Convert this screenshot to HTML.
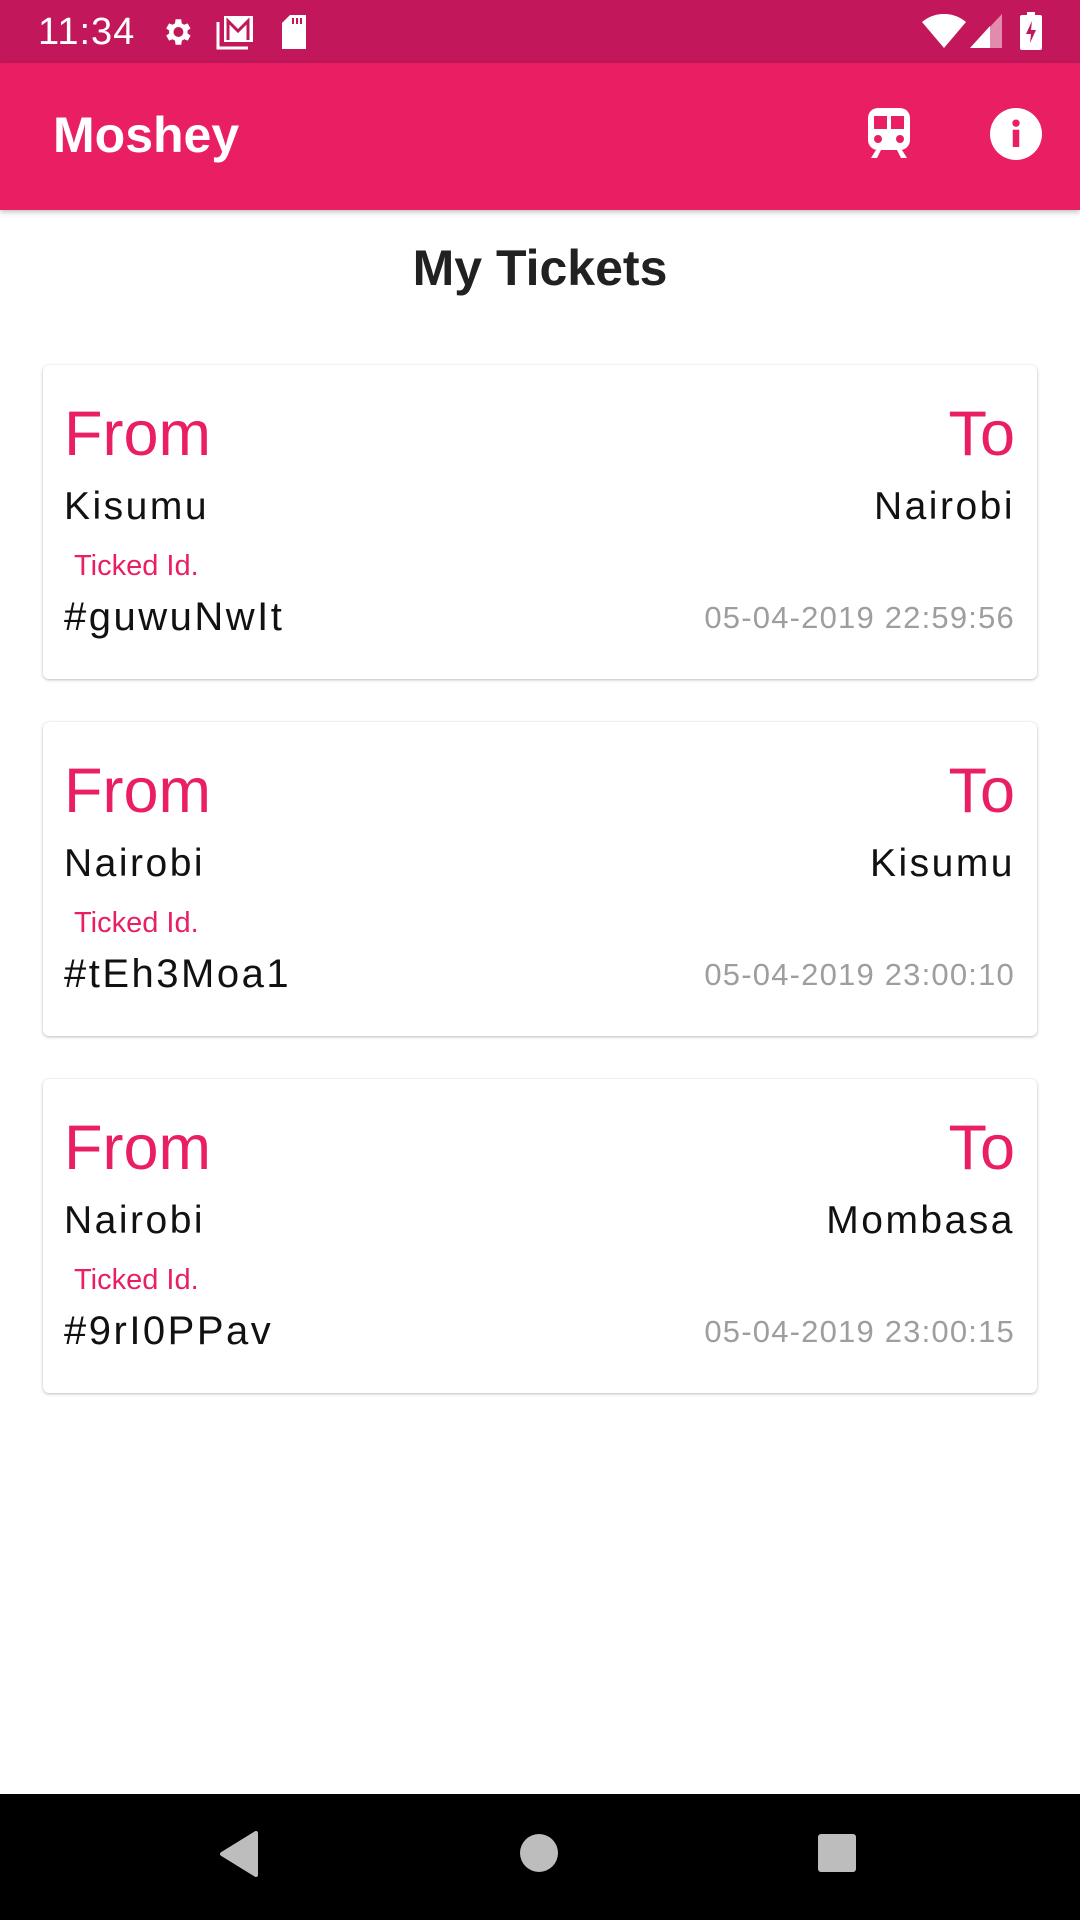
<!DOCTYPE html>
<html><head><meta charset="utf-8"><style>
*{margin:0;padding:0;box-sizing:border-box}
body{width:1080px;height:1920px;background:#fff;font-family:"Liberation Sans",sans-serif;position:relative;overflow:hidden}
.sb{position:absolute;left:0;top:0;width:1080px;height:63px;background:#c2185b;color:#fff}
.ab{position:absolute;left:0;top:63px;width:1080px;height:147px;background:#e91e63;box-shadow:0 2px 5px rgba(0,0,0,.25)}
.t{position:absolute;white-space:nowrap;line-height:1}
.card{position:absolute;left:43px;width:994px;height:314px;background:#fff;border-radius:6px;box-shadow:0 1px 3px rgba(0,0,0,.25),0 0 1px rgba(0,0,0,.1)}
.from{left:21px;top:38px;font-size:63px;color:#e91e63}
.to{right:22px;top:38px;font-size:63px;color:#e91e63}
.c1{left:21px;top:122px;font-size:39px;color:#111;letter-spacing:2.5px}
.c2{right:22px;top:122px;font-size:39px;color:#111;letter-spacing:2.5px}
.tid{left:31px;top:187px;font-size:29px;color:#e91e63}
.id{left:21px;top:232px;font-size:40px;color:#111;letter-spacing:2.5px}
.dt{right:22px;top:237px;font-size:31px;color:#9e9e9e;letter-spacing:1.2px}
.nav{position:absolute;left:0;top:1794px;width:1080px;height:126px;background:#000}
</style></head><body>
<div class="sb">
<div class="t" style="left:38px;top:13px;font-size:38px;letter-spacing:1px">11:34</div>
<svg style="position:absolute;left:160px;top:15px" width="34" height="34" viewBox="0 0 24 24"><path fill="#fff" d="M19.4 13a7.5 7.5 0 0 0 0-2l2.1-1.6-2-3.5-2.5 1a7 7 0 0 0-1.7-1L15 3h-4l-.4 2.9a7 7 0 0 0-1.7 1l-2.5-1-2 3.5L6.5 11a7.5 7.5 0 0 0 0 2l-2.1 1.6 2 3.5 2.5-1a7 7 0 0 0 1.7 1L11 21h4l.4-2.9a7 7 0 0 0 1.7-1l2.5 1 2-3.5zM13 15.5a3.5 3.5 0 1 1 0-7 3.5 3.5 0 0 1 0 7z"/></svg>
<svg style="position:absolute;left:215px;top:14px" width="40" height="36" viewBox="0 0 40 36"><path fill="none" stroke="#fff" stroke-width="3" d="M3 8v26h30"/><rect x="9" y="2" width="29" height="26" fill="#fff"/><path fill="none" stroke="#c2185b" stroke-width="3" d="M13 26V7l10 10 10-10v19"/></svg>
<svg style="position:absolute;left:280px;top:15px" width="28" height="34" viewBox="0 0 28 34"><path fill="#fff" d="M10 0h16v34H2V8z"/><path stroke="#c2185b" stroke-width="2" d="M13 3v6M17 3v6M21 3v6"/></svg>
<svg style="position:absolute;left:922px;top:14px" width="44" height="34" viewBox="0 0 44 34"><path fill="#fff" d="M22 34 0 8a34 34 0 0 1 44 0z"/></svg>
<svg style="position:absolute;left:970px;top:14px" width="32" height="34" viewBox="0 0 32 34"><path fill="#fff" opacity=".5" d="M32 0v34H0z"/><path fill="#fff" d="M20 12v22H0z"/></svg>
<svg style="position:absolute;left:1020px;top:12px" width="22" height="38" viewBox="0 0 22 38"><rect x="7" y="0" width="8" height="4" fill="#fff"/><rect x="0" y="3" width="22" height="35" rx="2" fill="#fff"/><path fill="#c2185b" d="M12 9 6 22h5l-1 9 6-13h-5z"/></svg>
</div>
<div class="ab">
<div class="t" style="left:53px;top:47px;font-size:50px;color:#fff;font-weight:bold">Moshey</div>
<svg style="position:absolute;left:866px;top:45px" width="46" height="52" viewBox="0 0 46 52"><rect x="2" y="0" width="42" height="42" rx="10" fill="#fff"/><rect x="8" y="8" width="13" height="13" fill="#e91e63"/><rect x="25" y="8" width="13" height="13" fill="#e91e63"/><circle cx="12" cy="31" r="4" fill="#e91e63"/><circle cx="34" cy="31" r="4" fill="#e91e63"/><path d="M10 42 5 50h6l4-8zM36 42l5 8h-6l-4-8z" fill="#fff"/></svg>
<svg style="position:absolute;left:990px;top:45px" width="52" height="52" viewBox="0 0 24 24"><circle cx="12" cy="12" r="12" fill="#fff"/><rect x="10.5" y="10" width="3" height="8" fill="#e91e63"/><circle cx="12" cy="7" r="1.7" fill="#e91e63"/></svg>
</div>
<div class="t" style="left:0;width:1080px;text-align:center;top:243px;font-size:50px;font-weight:bold;color:#212121">My Tickets</div>

<div class="card" style="top:365px">
<div class="t from">From</div><div class="t to">To</div>
<div class="t c1">Kisumu</div><div class="t c2">Nairobi</div>
<div class="t tid">Ticked Id.</div>
<div class="t id">#guwuNwIt</div><div class="t dt">05-04-2019 22:59:56</div>
</div>
<div class="card" style="top:722px">
<div class="t from">From</div><div class="t to">To</div>
<div class="t c1">Nairobi</div><div class="t c2">Kisumu</div>
<div class="t tid">Ticked Id.</div>
<div class="t id">#tEh3Moa1</div><div class="t dt">05-04-2019 23:00:10</div>
</div>
<div class="card" style="top:1079px">
<div class="t from">From</div><div class="t to">To</div>
<div class="t c1">Nairobi</div><div class="t c2">Mombasa</div>
<div class="t tid">Ticked Id.</div>
<div class="t id">#9rI0PPav</div><div class="t dt">05-04-2019 23:00:15</div>
</div>

<div class="nav">
<svg style="position:absolute;left:218px;top:37px" width="40" height="46" viewBox="0 0 40 46"><path d="M38 2v42L4 23z" fill="#bdbdbd" stroke="#bdbdbd" stroke-width="4" stroke-linejoin="round"/></svg>
<div style="position:absolute;left:520px;top:40px;width:38px;height:38px;border-radius:50%;background:#bdbdbd"></div>
<div style="position:absolute;left:818px;top:40px;width:38px;height:38px;border-radius:3px;background:#bdbdbd"></div>
</div>
</body></html>
